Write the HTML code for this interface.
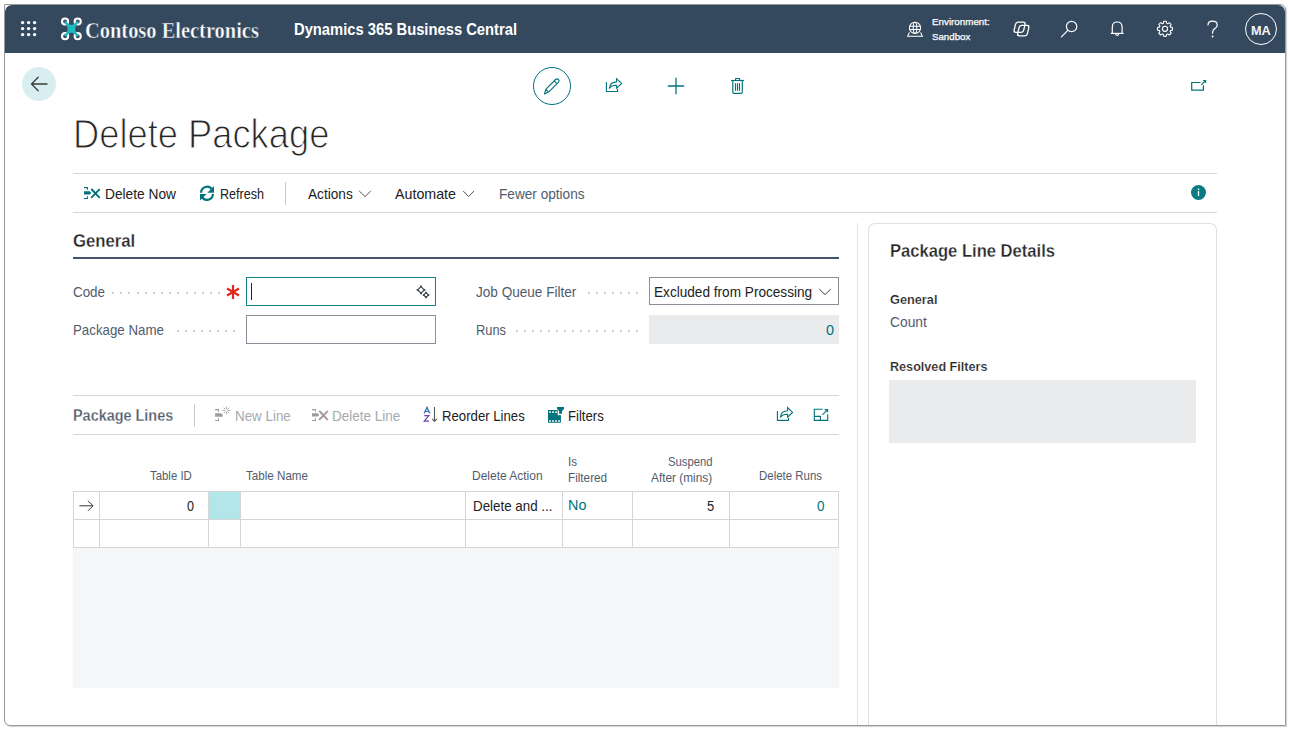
<!DOCTYPE html>
<html><head><meta charset="utf-8"><title>Delete Package</title>
<style>
*{margin:0;padding:0;box-sizing:border-box}
html,body{width:1290px;height:730px;overflow:hidden;background:#fff;font-family:"Liberation Sans",sans-serif;color:#212121;position:relative}
.a{position:absolute}
.s{position:absolute;overflow:visible}
.t{position:absolute;white-space:nowrap;line-height:1;transform-origin:0 0}
#frame{position:absolute;left:4px;top:4px;width:1282px;height:722px;border:1px solid #999;border-radius:0 6px 1px 6px;background:#fff;box-shadow:1px 1px 1px rgba(0,0,0,.18)}
#title{-webkit-text-stroke:1.1px #fff}
#hdr{position:absolute;left:5px;top:5px;width:1280px;height:48px;background:#34495e;border-radius:7px 7px 0 0}
</style></head><body>
<div id="frame"></div>
<div id="hdr"></div>
<svg class="s" style="left:0;top:0" width="60" height="50" fill="#fff"><circle cx="22.6" cy="22.6" r="1.7"/><circle cx="22.6" cy="28.6" r="1.7"/><circle cx="22.6" cy="34.6" r="1.7"/><circle cx="28.6" cy="22.6" r="1.7"/><circle cx="28.6" cy="28.6" r="1.7"/><circle cx="28.6" cy="34.6" r="1.7"/><circle cx="34.6" cy="22.6" r="1.7"/><circle cx="34.6" cy="28.6" r="1.7"/><circle cx="34.6" cy="34.6" r="1.7"/></svg>
<svg class="s" style="left:56px;top:12px" width="30" height="34" viewBox="56 12 30 34">
<g fill="none" stroke="#fff" stroke-width="2.1">
<circle cx="65.1" cy="21.5" r="3.05"/><circle cx="77.7" cy="21.5" r="3.05"/>
<circle cx="65.1" cy="36.2" r="3.05"/><circle cx="77.7" cy="36.2" r="3.05"/></g>
<path fill="#20b9c1" d="M66.0 20.6 Q71.4 29.4 76.8 20.6 L78.6 22.4 Q71.7 28.85 78.6 35.3 L76.8 37.1 Q71.4 28.3 66.0 37.1 L64.2 35.3 Q71.1 28.85 64.2 22.4 Z"/>
</svg>
<div class="t" style="left:85.10px;top:19.53px;font-size:22.30px;font-weight:700;font-family:'Liberation Serif',serif;color:#fff;transform:scaleX(0.9164);-webkit-text-stroke:0.45px #34495e">Contoso Electronics</div>
<div class="t" style="left:294.00px;top:22.45px;font-size:16.00px;font-weight:700;color:#fff;transform:scaleX(0.9219);">Dynamics 365 Business Central</div>
<svg class="s" style="left:900px;top:15px" width="30" height="30" viewBox="900 15 30 30" fill="none" stroke="#fff" stroke-width="1.05">
<circle cx="915" cy="27.8" r="5.6"/><ellipse cx="915" cy="27.8" rx="1.8" ry="5.6"/>
<path d="M909.6 26.3h10.8M909.6 29.4h10.8"/>
<path d="M909.4 32.4 L907.7 36.3 H922.3 L920.6 32.4" stroke-width="1.1"/>
</svg>
<div class="t" style="left:932.20px;top:16.57px;font-size:9.60px;color:#fff;transform:scaleX(1.0218);-webkit-text-stroke:0.25px #fff">Environment:</div>
<div class="t" style="left:932.20px;top:31.67px;font-size:9.60px;color:#fff;transform:scaleX(1.0107);-webkit-text-stroke:0.25px #fff">Sandbox</div>
<svg class="s" style="left:1005px;top:15px" width="30" height="30" viewBox="1005 15 30 30" fill="none" stroke="#fff" stroke-width="1.3" stroke-linejoin="round">
<rect x="1014.6" y="22.2" width="9.6" height="10.2" rx="2.3" transform="skewX(-13) translate(6.5 0)"/>
<rect x="1018.2" y="25.4" width="9.8" height="10.4" rx="2.3" transform="skewX(-13) translate(7.2 0)"/>
</svg>
<svg class="s" style="left:1055px;top:15px" width="30" height="30" viewBox="1055 15 30 30" fill="none" stroke="#fff" stroke-width="1.2">
<circle cx="1071.6" cy="26.5" r="5.2"/><path d="M1067.8 30.4 L1061.4 36.8" stroke-linecap="round"/>
</svg>
<svg class="s" style="left:1105px;top:15px" width="30" height="30" viewBox="1105 15 30 30" fill="none" stroke="#fff" stroke-width="1.2" stroke-linejoin="round">
<path d="M1112.3 33 V27 q0 -5 4.9 -5 q4.9 0 4.9 5 V33"/><path d="M1110.8 33.4 H1123.6"/><path d="M1115.9 34 q0 1.5 1.3 1.5 q1.3 0 1.3 -1.5"/>
</svg>
<svg class="s" style="left:1150px;top:15px" width="30" height="30" viewBox="1150 15 30 30" fill="none" stroke="#fff" stroke-width="1.1" stroke-linejoin="round">
<path d="M1163.69 21.36 A7.55 7.55 0 0 1 1166.31 21.36 L1166.68 23.30 A5.75 5.75 0 0 1 1167.70 23.72 L1169.33 22.62 A7.55 7.55 0 0 1 1171.18 24.47 L1170.08 26.10 A5.75 5.75 0 0 1 1170.50 27.12 L1172.44 27.49 A7.55 7.55 0 0 1 1172.44 30.11 L1170.50 30.48 A5.75 5.75 0 0 1 1170.08 31.50 L1171.18 33.13 A7.55 7.55 0 0 1 1169.33 34.98 L1167.70 33.88 A5.75 5.75 0 0 1 1166.68 34.30 L1166.31 36.24 A7.55 7.55 0 0 1 1163.69 36.24 L1163.32 34.30 A5.75 5.75 0 0 1 1162.30 33.88 L1160.67 34.98 A7.55 7.55 0 0 1 1158.82 33.13 L1159.92 31.50 A5.75 5.75 0 0 1 1159.50 30.48 L1157.56 30.11 A7.55 7.55 0 0 1 1157.56 27.49 L1159.50 27.12 A5.75 5.75 0 0 1 1159.92 26.10 L1158.82 24.47 A7.55 7.55 0 0 1 1160.67 22.62 L1162.30 23.72 A5.75 5.75 0 0 1 1163.32 23.30 Z"/><circle cx="1165" cy="28.8" r="2.6"/></svg>
<svg class="s" style="left:1200px;top:15px" width="30" height="30" viewBox="1200 15 30 30" fill="none" stroke="#fff" stroke-width="1.2" stroke-linecap="round">
<path d="M1208 25 q0 -3.8 4.6 -3.8 q4.6 0 4.6 3.8 q0 2.3 -2.4 3.6 q-2.2 1.2 -2.2 3.6 v1"/><circle cx="1212.6" cy="36.4" r="0.4" fill="#fff"/></svg>
<div class="a" style="left:1245px;top:13px;width:32px;height:32px;border:1px solid #fff;border-radius:50%"></div>
<div class="t" style="left:1251.20px;top:25.13px;font-size:12.60px;font-weight:700;color:#f4f4f4;transform:scaleX(1.0106);">MA</div>
<div class="a" style="left:22px;top:67px;width:34px;height:34px;border-radius:50%;background:#d9eef1"></div>
<svg class="s" style="left:22px;top:67px" width="34" height="34" viewBox="22 67 34 34" fill="none" stroke="#3b3b3b" stroke-width="1.3" stroke-linecap="round">
<path d="M47 84 H31.6 M38.2 77.3 L31.5 84 L38.2 90.7"/></svg>
<div class="a" style="left:533px;top:67px;width:38px;height:38px;border:1px solid #00737c;border-radius:50%"></div>
<svg class="s" style="left:533px;top:67px" width="38" height="38" viewBox="533 67 38 38" fill="none" stroke="#00737c" stroke-width="1.1" stroke-linejoin="round">
<path d="M544.5 94 L545.8 89.3 L555.6 79.5 Q557 78.1 558.4 79.5 Q559.8 80.9 558.4 82.3 L548.6 92.1 Z M554.2 80.9 L557 83.7 M545.8 89.3 L548.6 92.1"/></svg>
<svg class="s" style="left:600px;top:72px" width="28" height="28" viewBox="600 72 28 28" fill="none" stroke="#00737c" stroke-width="1.1"><g transform="translate(-171 -328.9)">
<path d="M777.4 411 V420.4 H788.6 V418"/><path d="M780.3 417.4 Q781 410.8 787.6 410.8 V407.6 L792.6 412.4 L787.6 417.2 V414.2 Q782.6 414 780.3 417.4 Z"/></g></svg>
<svg class="s" style="left:660px;top:70px" width="32" height="32" viewBox="660 70 32 32" fill="none" stroke="#00737c" stroke-width="1.3">
<path d="M676 77.8 V94.2 M667.8 86 H684.2"/></svg>
<svg class="s" style="left:725px;top:72px" width="26" height="26" viewBox="725 72 26 26" fill="none" stroke="#00737c" stroke-width="1.15" stroke-linejoin="round">
<path d="M731 80.5 H744"/><path d="M735.6 80.5 V78.5 H739.6 V80.5"/><path d="M732.8 80.5 V92.2 Q732.8 93.3 733.9 93.3 H741.2 Q742.3 93.3 742.3 92.2 V80.5"/>
<path d="M735.5 83.3 V90.7 M737.5 83.3 V90.7 M739.5 83.3 V90.7"/></svg>
<svg class="s" style="left:1185px;top:74px" width="26" height="22" viewBox="1185 74 26 22" fill="none" stroke="#00737c" stroke-width="1.2">
<path d="M1200.5 82.5 H1191.7 V90.1 H1203.4 V85.2"/><path d="M1201.3 84.8 L1204.6 81.5"/><path d="M1202.6 79.9 H1206.2 V83.5 Z" fill="#00737c" stroke="none"/></svg>
<div class="t" id="title" style="left:72.80px;top:114.42px;font-size:41.20px;color:#262626;transform:scaleX(0.8815);">Delete Package</div>
<div class="a" style="left:73px;top:173px;width:1144px;height:1px;background:#d3d8dc"></div>
<div class="a" style="left:73px;top:212px;width:1144px;height:1px;background:#d3d8dc"></div>
<div class="a" style="left:285px;top:182px;width:1px;height:23px;background:#c8ccd0"></div>
<svg class="s" style="left:80px;top:184px" width="24" height="20" viewBox="80 184 24 20"><g transform="translate(0 0)">
<path d="M84 187.6 H87.4 V189.7 M87.4 196.3 V198.5 H84" fill="none" stroke="#00737c" stroke-width="1.1"/>
<path d="M84 191.3 H89.9 L91.2 192.95 L89.9 194.6 H84Z" fill="#00737c"/>
<path d="M91.8 189.5 L99.2 197.3 M99.2 189.6 L91.6 197.3" fill="none" stroke="#00737c" stroke-width="1.9" stroke-linecap="round"/></g></svg>
<div class="t" style="left:104.90px;top:186.89px;font-size:14.30px;color:#212121;transform:scaleX(0.9612);">Delete Now</div>
<svg class="s" style="left:196px;top:182px" width="22" height="22" viewBox="196 182 22 22" fill="#00737c">
<g><path d="M200 192.7 A7 7 0 0 1 213.06 189.2 L211.16 190.3 A4.8 4.8 0 0 0 202.2 192.7 Z"/><path d="M207.4 192.7 H214 V186.1 Z"/></g>
<g transform="rotate(180 207 193.3)"><path d="M200 192.7 A7 7 0 0 1 213.06 189.2 L211.16 190.3 A4.8 4.8 0 0 0 202.2 192.7 Z"/><path d="M207.4 192.7 H214 V186.1 Z"/></g></svg>
<div class="t" style="left:219.60px;top:186.89px;font-size:14.30px;color:#212121;transform:scaleX(0.8805);">Refresh</div>
<div class="t" style="left:307.70px;top:186.89px;font-size:14.30px;color:#212121;transform:scaleX(0.9551);">Actions</div>
<svg class="s" style="left:356px;top:186px" width="18" height="14" viewBox="356 186 18 14" fill="none" stroke="#555" stroke-width="1"><path d="M359.2 191 L365 196.6 L370.8 191"/></svg>
<div class="t" style="left:395.00px;top:186.89px;font-size:14.30px;color:#212121;transform:scaleX(0.9967);">Automate</div>
<svg class="s" style="left:460px;top:186px" width="18" height="14" viewBox="460 186 18 14" fill="none" stroke="#555" stroke-width="1"><path d="M463.2 191 L468.6 196.6 L474 191"/></svg>
<div class="t" style="left:498.80px;top:186.89px;font-size:14.30px;color:#505c6d;transform:scaleX(0.9532);">Fewer options</div>
<div class="a" style="left:1191px;top:185px;width:15px;height:15px;border-radius:50%;background:#0a7b83"></div>
<svg class="s" style="left:1190px;top:185px" width="16" height="16" viewBox="1190 185 16 16" fill="#fff"><rect x="1197.8" y="188.6" width="1.4" height="1.5"/><rect x="1197.85" y="191.1" width="1.3" height="4.9"/></svg>
<div class="t" style="left:73.00px;top:231.89px;font-size:18.20px;font-weight:700;color:#262626;transform:scaleX(0.9189);-webkit-text-stroke:0.28px #fff">General</div>
<div class="a" style="left:73px;top:257px;width:766px;height:2px;background:#44556a"></div>
<div class="t" style="left:73.00px;top:285.39px;font-size:14.30px;color:#505c6d;transform:scaleX(0.9363);">Code</div>
<div class="a" style="left:112.10px;top:291.80px;width:2px;height:2px;background:#cdd0d4"></div><div class="a" style="left:120.26px;top:291.80px;width:2px;height:2px;background:#cdd0d4"></div><div class="a" style="left:128.42px;top:291.80px;width:2px;height:2px;background:#cdd0d4"></div><div class="a" style="left:136.58px;top:291.80px;width:2px;height:2px;background:#cdd0d4"></div><div class="a" style="left:144.75px;top:291.80px;width:2px;height:2px;background:#cdd0d4"></div><div class="a" style="left:152.91px;top:291.80px;width:2px;height:2px;background:#cdd0d4"></div><div class="a" style="left:161.07px;top:291.80px;width:2px;height:2px;background:#cdd0d4"></div><div class="a" style="left:169.23px;top:291.80px;width:2px;height:2px;background:#cdd0d4"></div><div class="a" style="left:177.39px;top:291.80px;width:2px;height:2px;background:#cdd0d4"></div><div class="a" style="left:185.55px;top:291.80px;width:2px;height:2px;background:#cdd0d4"></div><div class="a" style="left:193.72px;top:291.80px;width:2px;height:2px;background:#cdd0d4"></div><div class="a" style="left:201.88px;top:291.80px;width:2px;height:2px;background:#cdd0d4"></div><div class="a" style="left:210.04px;top:291.80px;width:2px;height:2px;background:#cdd0d4"></div><div class="a" style="left:218.20px;top:291.80px;width:2px;height:2px;background:#cdd0d4"></div>
<svg class="s" style="left:224px;top:283px" width="18" height="18" viewBox="224 283 18 18" fill="none" stroke="#e0281c" stroke-width="2.2"><path d="M233 285 V299 M227 288.5 L239 295.5 M239 288.5 L227 295.5"/></svg>
<div class="a" style="left:246px;top:277px;width:190px;height:29px;border:1px solid #11818a;background:#fff"></div>
<div class="a" style="left:251px;top:283px;width:1px;height:17px;background:#222"></div>
<svg class="s" style="left:412px;top:282px" width="20" height="20" viewBox="412 282 20 20" fill="none" stroke="#3a3f47" stroke-width="1.1" stroke-linejoin="miter">
<path d="M421 286.6 L424.3 289.9 L421 293.2 L417.7 289.9Z"/><path d="M426 292.6 L428.4 295 L426 297.4 L423.6 295Z"/>
<g fill="#3a3f47" stroke="none"><rect x="420.1" y="285.6" width="1.8" height="1.8"/><rect x="420.1" y="292.4" width="1.8" height="1.8"/><rect x="416.7" y="289" width="1.8" height="1.8"/><rect x="423.5" y="289" width="1.8" height="1.8"/>
<rect x="425.2" y="291.8" width="1.6" height="1.6"/><rect x="425.2" y="296.6" width="1.6" height="1.6"/><rect x="422.8" y="294.2" width="1.6" height="1.6"/><rect x="427.6" y="294.2" width="1.6" height="1.6"/></g></svg>
<div class="t" style="left:73.00px;top:323.19px;font-size:14.30px;color:#505c6d;transform:scaleX(0.9297);">Package Name</div>
<div class="a" style="left:177.00px;top:330.00px;width:2px;height:2px;background:#cdd0d4"></div><div class="a" style="left:185.00px;top:330.00px;width:2px;height:2px;background:#cdd0d4"></div><div class="a" style="left:193.00px;top:330.00px;width:2px;height:2px;background:#cdd0d4"></div><div class="a" style="left:201.00px;top:330.00px;width:2px;height:2px;background:#cdd0d4"></div><div class="a" style="left:209.00px;top:330.00px;width:2px;height:2px;background:#cdd0d4"></div><div class="a" style="left:217.00px;top:330.00px;width:2px;height:2px;background:#cdd0d4"></div><div class="a" style="left:225.00px;top:330.00px;width:2px;height:2px;background:#cdd0d4"></div><div class="a" style="left:233.00px;top:330.00px;width:2px;height:2px;background:#cdd0d4"></div>
<div class="a" style="left:246px;top:315px;width:190px;height:29px;border:1px solid #8a9099;background:#fff"></div>
<div class="t" style="left:476.00px;top:285.39px;font-size:14.30px;color:#505c6d;transform:scaleX(0.9488);">Job Queue Filter</div>
<div class="a" style="left:587.70px;top:291.80px;width:2px;height:2px;background:#cdd0d4"></div><div class="a" style="left:595.77px;top:291.80px;width:2px;height:2px;background:#cdd0d4"></div><div class="a" style="left:603.83px;top:291.80px;width:2px;height:2px;background:#cdd0d4"></div><div class="a" style="left:611.90px;top:291.80px;width:2px;height:2px;background:#cdd0d4"></div><div class="a" style="left:619.97px;top:291.80px;width:2px;height:2px;background:#cdd0d4"></div><div class="a" style="left:628.03px;top:291.80px;width:2px;height:2px;background:#cdd0d4"></div><div class="a" style="left:636.10px;top:291.80px;width:2px;height:2px;background:#cdd0d4"></div>
<div class="a" style="left:649px;top:277px;width:190px;height:28px;border:1px solid #8a9099;background:#fff"></div>
<div class="t" style="left:653.80px;top:285.39px;font-size:14.30px;color:#212121;transform:scaleX(0.9523);">Excluded from Processing</div>
<svg class="s" style="left:815px;top:284px" width="20" height="16" viewBox="815 284 20 16" fill="none" stroke="#444" stroke-width="1"><path d="M819.2 289 L825 294.6 L830.8 289"/></svg>
<div class="t" style="left:476.00px;top:323.19px;font-size:14.30px;color:#505c6d;transform:scaleX(0.8985);">Runs</div>
<div class="a" style="left:515.70px;top:329.90px;width:2px;height:2px;background:#cdd0d4"></div><div class="a" style="left:523.73px;top:329.90px;width:2px;height:2px;background:#cdd0d4"></div><div class="a" style="left:531.75px;top:329.90px;width:2px;height:2px;background:#cdd0d4"></div><div class="a" style="left:539.78px;top:329.90px;width:2px;height:2px;background:#cdd0d4"></div><div class="a" style="left:547.81px;top:329.90px;width:2px;height:2px;background:#cdd0d4"></div><div class="a" style="left:555.83px;top:329.90px;width:2px;height:2px;background:#cdd0d4"></div><div class="a" style="left:563.86px;top:329.90px;width:2px;height:2px;background:#cdd0d4"></div><div class="a" style="left:571.89px;top:329.90px;width:2px;height:2px;background:#cdd0d4"></div><div class="a" style="left:579.91px;top:329.90px;width:2px;height:2px;background:#cdd0d4"></div><div class="a" style="left:587.94px;top:329.90px;width:2px;height:2px;background:#cdd0d4"></div><div class="a" style="left:595.97px;top:329.90px;width:2px;height:2px;background:#cdd0d4"></div><div class="a" style="left:603.99px;top:329.90px;width:2px;height:2px;background:#cdd0d4"></div><div class="a" style="left:612.02px;top:329.90px;width:2px;height:2px;background:#cdd0d4"></div><div class="a" style="left:620.05px;top:329.90px;width:2px;height:2px;background:#cdd0d4"></div><div class="a" style="left:628.07px;top:329.90px;width:2px;height:2px;background:#cdd0d4"></div><div class="a" style="left:636.10px;top:329.90px;width:2px;height:2px;background:#cdd0d4"></div>
<div class="a" style="left:649px;top:315px;width:190px;height:29px;background:#eaebec"></div>
<div class="t" style="left:826.00px;top:323.19px;font-size:14.30px;color:#00737c;transform:scaleX(1.0080);">0</div>
<div class="a" style="left:857px;top:223px;width:1px;height:502px;background:#e1e4e7"></div>
<div class="a" style="left:868px;top:223px;width:349px;height:502px;border:1px solid #dcdfe3;border-bottom:none;border-radius:7px 7px 0 0"></div>
<div class="t" style="left:889.50px;top:241.79px;font-size:18.20px;font-weight:700;color:#262626;transform:scaleX(0.9117);-webkit-text-stroke:0.28px #fff">Package Line Details</div>
<div class="t" style="left:889.50px;top:293.15px;font-size:13.40px;font-weight:700;color:#262626;transform:scaleX(0.9516);-webkit-text-stroke:0.2px #fff">General</div>
<div class="t" style="left:889.50px;top:315.49px;font-size:14.30px;color:#505c6d;transform:scaleX(0.9647);">Count</div>
<div class="t" style="left:889.50px;top:359.95px;font-size:13.40px;font-weight:700;color:#262626;transform:scaleX(0.9419);-webkit-text-stroke:0.2px #fff">Resolved Filters</div>
<div class="a" style="left:889px;top:380px;width:307px;height:63px;background:#eaebec"></div>
<div class="a" style="left:73px;top:395px;width:766px;height:1px;background:#d3d8dc"></div>
<div class="a" style="left:73px;top:434px;width:766px;height:1px;background:#d3d8dc"></div>
<div class="t" style="left:73.00px;top:407.21px;font-size:17.00px;font-weight:700;color:#505c6d;transform:scaleX(0.8484);-webkit-text-stroke:0.28px #fff">Package Lines</div>
<div class="a" style="left:194px;top:404px;width:1px;height:23px;background:#c8ccd0"></div>
<svg class="s" style="left:210px;top:402px" width="24" height="24" viewBox="210 402 24 24">
<path d="M215.1 409.6 H218.5 V411.7 M218.5 418.3 V420.5 H215.1" fill="none" stroke="#9c9c9c" stroke-width="1.1"/>
<path d="M215.1 413.2 H221.3 V414.3 H222.7 V416.8 H215.1Z" fill="#9c9c9c"/>
<path d="M226.4 406.6 V414.2 M222.6 410.4 H230.2 M223.7 407.7 L229.1 413.1 M229.1 407.7 L223.7 413.1" fill="none" stroke="#9c9c9c" stroke-width="0.9"/><circle cx="226.4" cy="410.4" r="1.4" fill="#fff"/></svg>
<div class="t" style="left:235.20px;top:408.89px;font-size:14.30px;color:#a5aab0;transform:scaleX(0.9358);">New Line</div>
<svg class="s" style="left:308px;top:406px" width="24" height="20" viewBox="308 406 24 20"><g transform="translate(228 222)">
<path d="M84 187.6 H87.4 V189.7 M87.4 196.3 V198.5 H84" fill="none" stroke="#9c9c9c" stroke-width="1.1"/>
<path d="M84 191.3 H89.9 L91.2 192.95 L89.9 194.6 H84Z" fill="#9c9c9c"/>
<path d="M91.8 189.5 L99.2 197.3 M99.2 189.6 L91.6 197.3" fill="none" stroke="#9c9c9c" stroke-width="1.9" stroke-linecap="round"/></g></svg>
<div class="t" style="left:332.20px;top:408.89px;font-size:14.30px;color:#a5aab0;transform:scaleX(0.9439);">Delete Line</div>
<svg class="s" style="left:420px;top:402px" width="22" height="24" viewBox="420 402 22 24" fill="none">
<path d="M424.1 413.6 L427 407.2 L429.9 413.6 M425.1 411.4 H428.9" stroke="#3b74b9" stroke-width="1.3"/><path d="M424.2 415.7 H428.8 L424.2 421.2 H429" stroke="#7b3fae" stroke-width="1.2"/><path d="M434.5 407 V421.4 M432.2 418.9 L434.5 421.4 L436.8 418.9" stroke="#5a5a5a" stroke-width="1.1"/></svg>
<div class="t" style="left:442.00px;top:408.89px;font-size:14.30px;color:#212121;transform:scaleX(0.9216);">Reorder Lines</div>
<svg class="s" style="left:544px;top:402px" width="24" height="24" viewBox="544 402 24 24">
<path d="M548 410 H557.7 V415.2 H560.9 V422.8 H548 Z M557 407 H564 V409 L562 411 V413.8 H559.1 V411 L557 409 Z" fill="#00737c"/>
<g fill="#fff"><rect x="549.2" y="411.3" width="1.7" height="1.6"/><rect x="552.2" y="411.3" width="1.7" height="1.6"/><rect x="555.2" y="411.3" width="1.7" height="1.6"/><rect x="549.2" y="420.2" width="1.7" height="1.6"/><rect x="552.2" y="420.2" width="1.7" height="1.6"/><rect x="555.2" y="420.2" width="1.7" height="1.6"/><rect x="558.2" y="420.2" width="1.7" height="1.6"/></g></svg>
<div class="t" style="left:567.80px;top:408.89px;font-size:14.30px;color:#212121;transform:scaleX(0.9196);">Filters</div>
<svg class="s" style="left:772px;top:403px" width="24" height="24" viewBox="772 403 24 24" fill="none" stroke="#00737c" stroke-width="1.1" stroke-linejoin="miter">
<path d="M777.4 411 V420.4 H788.6 V418"/><path d="M780.3 417.4 Q781 410.8 787.6 410.8 V407.6 L792.6 412.4 L787.6 417.2 V414.2 Q782.6 414 780.3 417.4 Z"/></svg>
<svg class="s" style="left:810px;top:403px" width="24" height="24" viewBox="810 403 24 24" fill="none" stroke="#00737c" stroke-width="1.1">
<path d="M822.6 409.3 H814.3 V420.4 H827.7 V414.2"/><path d="M814.3 416.4 H820.4 V420.4"/><path d="M822.4 414.8 L827 410.2"/><path d="M824.2 409.1 H828.1 V412.8 Z" fill="#00737c" stroke="none"/></svg>
<div class="t" style="left:150.00px;top:469.63px;font-size:12.60px;color:#505c6d;transform:scaleX(0.9046);">Table ID</div>
<div class="t" style="left:246.00px;top:469.63px;font-size:12.60px;color:#505c6d;transform:scaleX(0.9223);">Table Name</div>
<div class="t" style="left:471.60px;top:469.63px;font-size:12.60px;color:#505c6d;transform:scaleX(0.9509);">Delete Action</div>
<div class="t" style="left:567.60px;top:455.93px;font-size:12.60px;color:#505c6d;transform:scaleX(0.9200);">Is</div>
<div class="t" style="left:567.60px;top:471.63px;font-size:12.60px;color:#505c6d;transform:scaleX(0.9305);">Filtered</div>
<div class="t" style="left:667.70px;top:455.93px;font-size:12.60px;color:#505c6d;transform:scaleX(0.8947);">Suspend</div>
<div class="t" style="left:651.00px;top:471.63px;font-size:12.60px;color:#505c6d;transform:scaleX(0.9399);">After (mins)</div>
<div class="t" style="left:759.00px;top:469.63px;font-size:12.60px;color:#505c6d;transform:scaleX(0.9087);">Delete Runs</div>
<div class="a" style="left:73px;top:491px;width:766px;height:1px;background:#d3d5d9"></div>
<div class="a" style="left:73px;top:519px;width:766px;height:1px;background:#d3d5d9"></div>
<div class="a" style="left:73px;top:547px;width:766px;height:1px;background:#d3d5d9"></div>
<div class="a" style="left:73px;top:491px;width:1px;height:57px;background:#d3d5d9"></div>
<div class="a" style="left:99px;top:491px;width:1px;height:57px;background:#d3d5d9"></div>
<div class="a" style="left:208px;top:491px;width:1px;height:57px;background:#d3d5d9"></div>
<div class="a" style="left:240px;top:491px;width:1px;height:57px;background:#d3d5d9"></div>
<div class="a" style="left:465px;top:491px;width:1px;height:57px;background:#d3d5d9"></div>
<div class="a" style="left:562px;top:491px;width:1px;height:57px;background:#d3d5d9"></div>
<div class="a" style="left:632px;top:491px;width:1px;height:57px;background:#d3d5d9"></div>
<div class="a" style="left:729px;top:491px;width:1px;height:57px;background:#d3d5d9"></div>
<div class="a" style="left:838px;top:491px;width:1px;height:57px;background:#d3d5d9"></div>
<div class="a" style="left:209px;top:492px;width:31px;height:27px;background:#b2e6e9"></div>
<svg class="s" style="left:76px;top:497px" width="22" height="18" viewBox="76 497 22 18" fill="none" stroke="#333" stroke-width="1"><path d="M79.4 505.8 H93 M88 500.8 L93 505.8 L88 510.8"/></svg>
<div class="t" style="left:187.00px;top:499.19px;font-size:14.30px;color:#212121;transform:scaleX(0.8820);">0</div>
<div class="t" style="left:472.90px;top:499.19px;font-size:14.30px;color:#212121;transform:scaleX(0.9348);">Delete and ...</div>
<div class="t" style="left:567.60px;top:498.09px;font-size:14.30px;color:#00737c;transform:scaleX(1.0072);">No</div>
<div class="t" style="left:706.80px;top:499.19px;font-size:14.30px;color:#212121;transform:scaleX(0.9072);">5</div>
<div class="t" style="left:816.50px;top:499.19px;font-size:14.30px;color:#00737c;transform:scaleX(0.9450);">0</div>
<div class="a" style="left:73px;top:548px;width:766px;height:140px;background:#f5f6f7"></div>
</body></html>
